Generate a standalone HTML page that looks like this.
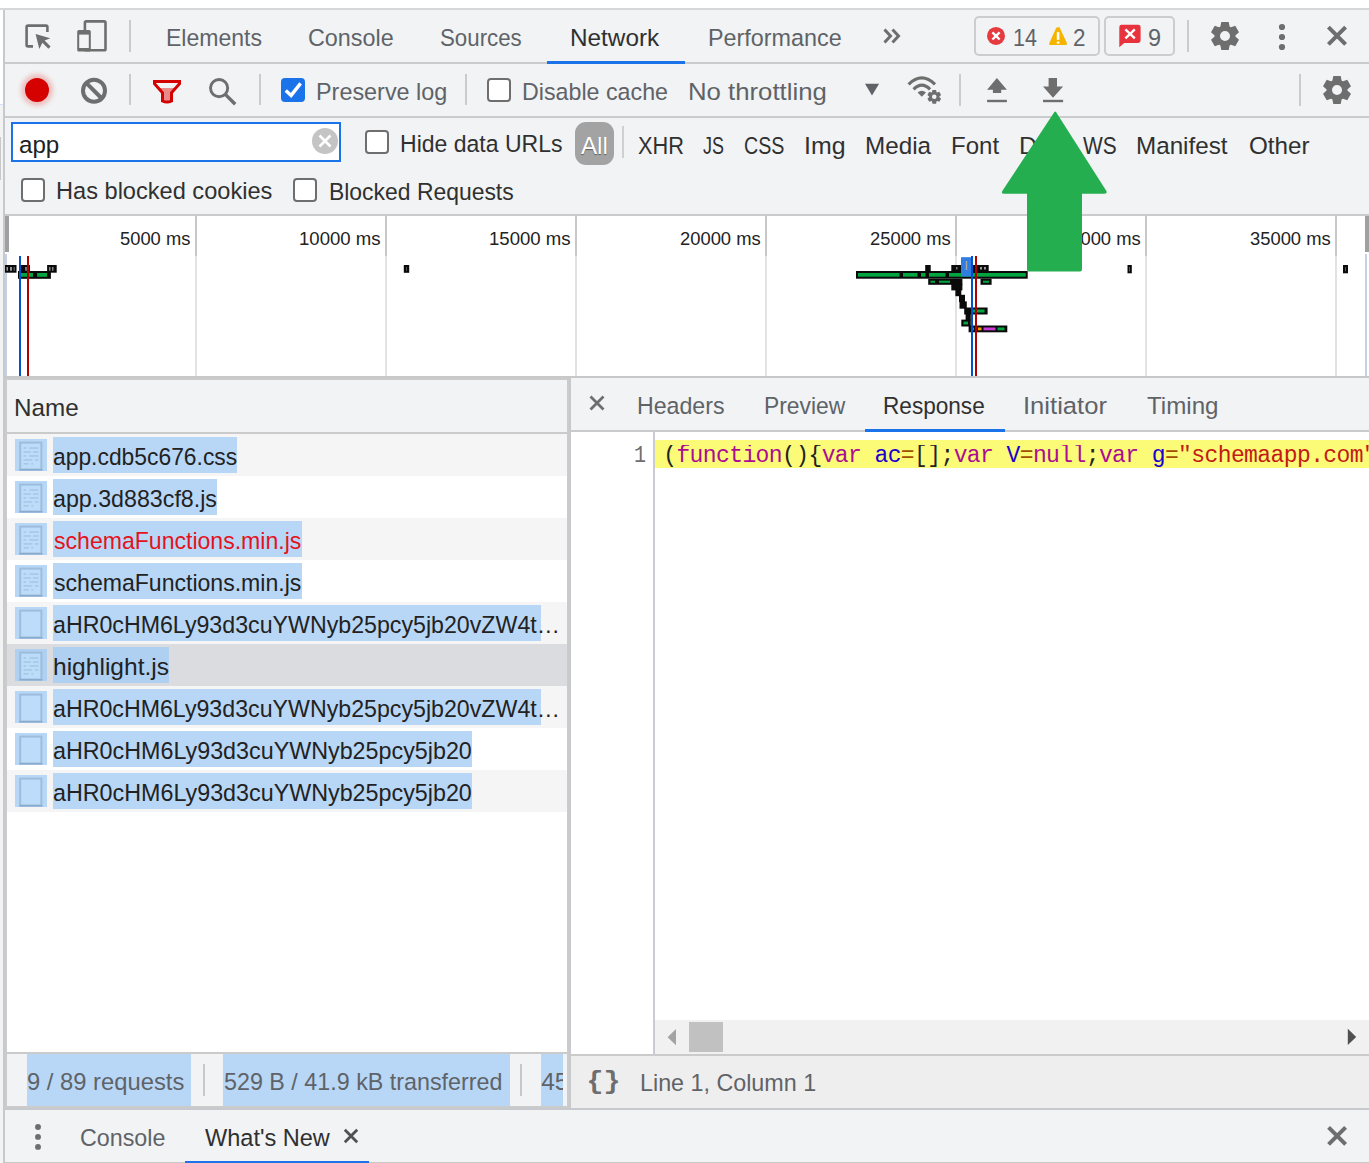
<!DOCTYPE html>
<html><head><meta charset="utf-8"><title>DevTools Network</title>
<style>
html,body{margin:0;padding:0;}
body{width:1369px;height:1163px;position:relative;overflow:hidden;background:#fff;font-family:'Liberation Sans',sans-serif;}
.b{position:absolute;}
.t{position:absolute;white-space:pre;transform-origin:0 0;font-family:'Liberation Sans',sans-serif;}
svg{position:absolute;overflow:visible;}
</style></head><body>
<!-- page behind devtools -->
<div class="b" style="left:0;top:104px;width:3px;height:1px;background:#d3e0f5"></div>
<div class="b" style="left:0;top:105px;width:3px;height:1058px;background:#f3f3f3"></div>
<div class="b" style="left:0;top:137px;width:1px;height:43px;background:#c8c8c8"></div>
<!-- devtools frame -->
<div class="b" style="left:0;top:8px;width:1369px;height:2px;background:#d5d7db"></div>
<div class="b" style="left:3px;top:10px;width:2px;height:1153px;background:#c6c9ce"></div>
<!-- toolbar 1 -->
<div class="b" style="left:5px;top:10px;width:1364px;height:52px;background:#f1f3f4"></div>
<div class="b" style="left:5px;top:62px;width:1364px;height:2px;background:#cbcbcb"></div>
<div class="b" style="left:547px;top:61px;width:138px;height:3px;background:#1a73e8"></div>
<!-- toolbar 2 -->
<div class="b" style="left:5px;top:64px;width:1364px;height:52px;background:#f1f3f4"></div>
<div class="b" style="left:5px;top:116px;width:1364px;height:2px;background:#cbcbcb"></div>
<!-- filter bar -->
<div class="b" style="left:5px;top:118px;width:1364px;height:96px;background:#f1f3f4"></div>
<div class="b" style="left:5px;top:214px;width:1364px;height:2px;background:#cbcbcb"></div>
<div class="b" style="left:11px;top:122px;width:326px;height:36px;background:#fff;border:2px solid #1a73e8"></div>
<div class="b" style="left:575px;top:122px;width:39px;height:43px;background:#a3a3a3;border-radius:11px"></div>
<div class="b" style="left:622px;top:126px;width:2px;height:32px;background:#d0d0d0"></div>
<!-- timeline -->
<div class="b" style="left:5px;top:216px;width:1364px;height:160px;background:#fff"></div>
<div class="b" style="left:5px;top:376px;width:1364px;height:2px;background:#c8c8c8"></div>
<!-- left panel -->
<div class="b" style="left:5px;top:378px;width:562px;height:730px;background:#fff"></div>
<div class="b" style="left:5px;top:378px;width:562px;height:2px;background:#cbcbcb"></div>
<div class="b" style="left:5px;top:380px;width:2px;height:728px;background:#cbcbcb"></div>
<div class="b" style="left:7px;top:380px;width:560px;height:52px;background:#f1f3f4"></div>
<div class="b" style="left:7px;top:432px;width:560px;height:2px;background:#cbcbcb"></div>
<div class="b" style="left:7px;top:434px;width:560px;height:42px;background:#f5f5f5"></div>
<div class="b" style="left:7px;top:518px;width:560px;height:42px;background:#f5f5f5"></div>
<div class="b" style="left:7px;top:602px;width:560px;height:42px;background:#f5f5f5"></div>
<div class="b" style="left:7px;top:644px;width:560px;height:42px;background:#dadce0"></div>
<div class="b" style="left:7px;top:686px;width:560px;height:42px;background:#f5f5f5"></div>
<div class="b" style="left:7px;top:770px;width:560px;height:42px;background:#f5f5f5"></div>
<!-- status bar left -->
<div class="b" style="left:7px;top:1052px;width:560px;height:2px;background:#cbcbcb"></div>
<div class="b" style="left:7px;top:1054px;width:560px;height:52px;background:#f1f3f4"></div>
<div class="b" style="left:5px;top:1106px;width:562px;height:2px;background:#cbcbcb"></div>
<!-- split divider -->
<div class="b" style="left:567px;top:378px;width:2px;height:730px;background:#cbcbcb"></div>
<div class="b" style="left:569px;top:378px;width:2px;height:730px;background:#c6c9ce"></div>
<!-- right panel -->
<div class="b" style="left:571px;top:378px;width:798px;height:52px;background:#f1f3f4"></div>
<div class="b" style="left:571px;top:430px;width:798px;height:2px;background:#cbcbcb"></div>
<div class="b" style="left:865px;top:429px;width:140px;height:3px;background:#1a73e8"></div>
<div class="b" style="left:571px;top:432px;width:798px;height:622px;background:#fff"></div>
<div class="b" style="left:653px;top:432px;width:2px;height:622px;background:#c9ccd2"></div>
<div class="b" style="left:655px;top:440px;width:714px;height:28px;background:#fbfb77"></div>
<div class="b" style="left:655px;top:1020px;width:714px;height:34px;background:#f1f1f1"></div>
<div class="b" style="left:689px;top:1022px;width:34px;height:30px;background:#c1c1c1"></div>
<div class="b" style="left:571px;top:1054px;width:798px;height:2px;background:#cbcbcb"></div>
<div class="b" style="left:571px;top:1056px;width:798px;height:52px;background:#eeeeee"></div>
<!-- drawer -->
<div class="b" style="left:5px;top:1108px;width:1364px;height:2px;background:#c6c9ce"></div>
<div class="b" style="left:5px;top:1110px;width:1364px;height:53px;background:#f1f3f4"></div>
<div class="b" style="left:5px;top:1162px;width:1364px;height:1px;background:#c8c8c8"></div>
<div class="b" style="left:185px;top:1161px;width:184px;height:2px;background:#1a73e8"></div>
<svg style="left:20px;top:18px;" width="36" height="36" viewBox="20 18 36 36">
<path d="M33,46.4 H28 Q26.6,46.4 26.6,45 V27 Q26.6,25.6 28,25.6 H46 Q47.4,25.6 47.4,27 V32" fill="none" stroke="#6e6e6e" stroke-width="2.6"/>
<path d="M35.6,34 L50.3,38.3 L44.6,40.6 L50.6,46.6 L48.4,48.8 L42.4,42.8 L39.3,48.9 Z" fill="#6e6e6e"/></svg>
<svg style="left:72px;top:16px;" width="40" height="40" viewBox="72 16 40 40">
<rect x="84.9" y="21.4" width="20.6" height="28.9" rx="1.4" fill="none" stroke="#6e6e6e" stroke-width="2.6"/>
<rect x="77.2" y="30.1" width="13.6" height="21.5" rx="1.6" fill="#6e6e6e"/>
<rect x="79.2" y="34.6" width="9.6" height="13.4" fill="#f1f3f4"/></svg>
<div class="b" style="left:129.0px;top:20px;width:2px;height:32px;background:#cbcbcb"></div>
<svg style="left:880px;top:26px;" width="24" height="20" viewBox="880 26 24 20"><path d="M884.5,29.5 L890.5,36 L884.5,42.5 M892.5,29.5 L898.5,36 L892.5,42.5" fill="none" stroke="#6e6e6e" stroke-width="3"/></svg>
<div class="b" style="left:974px;top:16px;width:122px;height:36px;border:2px solid #cbcdd1;border-radius:5px"></div>
<div class="b" style="left:1104px;top:16px;width:67px;height:36px;border:2px solid #cbcdd1;border-radius:5px"></div>
<svg style="left:985px;top:24px;" width="84" height="24" viewBox="985 24 84 24">
<circle cx="996" cy="35.9" r="9" fill="#e53a40"/>
<path d="M992.4,32.3 L999.6,39.5 M999.6,32.3 L992.4,39.5" stroke="#fff" stroke-width="2.4"/>
<path d="M1058,27.5 Q1058.8,26.6 1059.6,27.6 L1067,43.2 Q1067.4,45 1065.8,45 H1050.3 Q1048.7,45 1049.2,43.3 L1056.4,27.6 Z" fill="#f4b400"/>
<rect x="1056.8" y="32.2" width="2.6" height="7.6" fill="#fff"/><rect x="1056.8" y="41.6" width="2.6" height="2" fill="#fff"/></svg>
<svg style="left:1115px;top:22px;" width="30" height="28" viewBox="1115 22 30 28">
<path d="M1121.5,24.8 H1138.2 Q1140.6,24.8 1140.6,27.2 V40.5 Q1140.6,42.9 1138.2,42.9 H1124.2 L1119.3,47.3 V27.2 Q1119.3,24.8 1121.5,24.8 Z" fill="#e8333f"/>
<path d="M1125.4,29.4 L1134.8,38.3 M1134.8,29.4 L1125.4,38.3" stroke="#fff" stroke-width="2.4"/></svg>
<div class="b" style="left:1187.0px;top:20px;width:2px;height:32px;background:#cbcbcb"></div>
<svg style="left:1208px;top:19px;" width="34" height="34" viewBox="1208 19 34 34"><path d="M1220.40,26.40 L1221.30,22.00 L1228.70,22.00 L1229.60,26.40 L1230.20,26.99 L1231.01,27.22 L1235.27,25.80 L1238.97,32.20 L1235.61,35.18 L1235.40,36.00 L1235.61,36.82 L1238.97,39.80 L1235.27,46.20 L1231.01,44.78 L1230.20,45.01 L1229.60,45.60 L1228.70,50.00 L1221.30,50.00 L1220.40,45.60 L1219.80,45.01 L1218.99,44.78 L1214.73,46.20 L1211.03,39.80 L1214.39,36.82 L1214.60,36.00 L1214.39,35.18 L1211.03,32.20 L1214.73,25.80 L1218.99,27.22 L1219.80,26.99 Z M1230.0,36 A5.0,5.0 0 1 0 1220.0,36 A5.0,5.0 0 1 0 1230.0,36 Z" fill="#6e6e6e" fill-rule="evenodd"/></svg>
<svg style="left:1276px;top:20px;" width="12" height="32" viewBox="1276 20 12 32"><circle cx="1282" cy="27" r="3.1" fill="#6e6e6e"/><circle cx="1282" cy="37" r="3.1" fill="#6e6e6e"/><circle cx="1282" cy="47" r="3.1" fill="#6e6e6e"/></svg>
<svg style="left:1322px;top:21px;" width="30" height="30" viewBox="1322 21 30 30"><path d="M1328.4,27.2 L1345.6,44.4 M1345.6,27.2 L1328.4,44.4" stroke="#6e6e6e" stroke-width="4"/></svg>
<div class="b" style="left:25px;top:78px;width:24px;height:24px;border-radius:50%;background:#d50000;box-shadow:0 0 4px 4px rgba(229,57,53,.28)"></div>
<svg style="left:78px;top:76px;" width="32" height="32" viewBox="78 76 32 32"><circle cx="94" cy="90.7" r="11" fill="none" stroke="#6e6e6e" stroke-width="4"/><path d="M86.2,82.9 L101.8,98.5" stroke="#6e6e6e" stroke-width="4"/></svg>
<div class="b" style="left:129.0px;top:74px;width:2px;height:31px;background:#cbcbcb"></div>
<svg style="left:150px;top:77px;" width="34" height="30" viewBox="150 77 34 30">
<path d="M157.6,88 H176.4 L171.5,92.8 V101 Q167,103 162.5,101 V92.8 Z" fill="#e88a8a"/>
<path d="M154.5,81.5 H179.5 V83.8 L171.5,92.8 V101 Q167,103.2 162.5,101 V92.8 L154.5,83.8 Z" fill="none" stroke="#d50000" stroke-width="3" stroke-linejoin="miter"/></svg>
<svg style="left:206px;top:75px;" width="34" height="34" viewBox="206 75 34 34"><circle cx="219.1" cy="88.1" r="8.6" fill="none" stroke="#6e6e6e" stroke-width="2.9"/><path d="M225.6,94.6 L235.2,104.2" stroke="#6e6e6e" stroke-width="3.4"/></svg>
<div class="b" style="left:259.0px;top:74px;width:2px;height:31px;background:#cbcbcb"></div>
<div class="b" style="left:281px;top:78px;width:24px;height:24px;border-radius:4px;background:#1a73e8"></div>
<svg style="left:281px;top:78px;" width="24" height="24" viewBox="281 78 24 24"><path d="M285.8,90.4 L291.1,95.4 L300.6,83.4" fill="none" stroke="#fff" stroke-width="3.4"/></svg>
<div class="b" style="left:465.0px;top:74px;width:2px;height:31px;background:#cbcbcb"></div>
<div class="b" style="left:487px;top:78px;width:20px;height:20px;border:2px solid #6e6e6e;border-radius:4px;background:#fff"></div>
<svg style="left:862px;top:82px;" width="20" height="16" viewBox="862 82 20 16"><path d="M865,83.7 H879.1 L872,95.6 Z" fill="#5f6368"/></svg>
<svg style="left:904px;top:72px;" width="42" height="34" viewBox="904 72 42 34">
<path d="M908.6,84.3 Q921.8,71.5 935,84.3" fill="none" stroke="#6e6e6e" stroke-width="3.2"/>
<path d="M913.6,89.3 Q921.8,81 930,89.3" fill="none" stroke="#6e6e6e" stroke-width="3.2"/>
<path d="M917.6,92.6 Q921.8,89 926,92.6 L921.8,96.8 Z" fill="#6e6e6e"/>
<circle cx="934.2" cy="96.9" r="6.6" fill="#f1f3f4"/><path d="M932.00,92.10 L932.44,89.94 L936.06,89.94 L936.50,92.10 L936.80,92.39 L937.20,92.50 L939.28,91.80 L941.10,94.94 L939.45,96.40 L939.35,96.80 L939.45,97.20 L941.10,98.66 L939.28,101.80 L937.20,101.10 L936.80,101.21 L936.50,101.50 L936.06,103.66 L932.44,103.66 L932.00,101.50 L931.70,101.21 L931.30,101.10 L929.22,101.80 L927.40,98.66 L929.05,97.20 L929.15,96.80 L929.05,96.40 L927.40,94.94 L929.22,91.80 L931.30,92.50 L931.70,92.39 Z M936.55,96.8 A2.3,2.3 0 1 0 931.95,96.8 A2.3,2.3 0 1 0 936.55,96.8 Z" fill="#6e6e6e" fill-rule="evenodd"/></svg>
<div class="b" style="left:959.0px;top:74px;width:2px;height:32px;background:#cbcbcb"></div>
<svg style="left:984px;top:75px;" width="28" height="30" viewBox="984 75 28 30"><path d="M996.9,78 L1006.9,89.7 H1001.2 V93 H992.9 V89.7 H987.1 Z" fill="#6e6e6e"/><rect x="987.1" y="99.8" width="19.8" height="2.4" fill="#6e6e6e"/></svg>
<svg style="left:1040px;top:75px;" width="28" height="30" viewBox="1040 75 28 30"><path d="M1048.6,78 H1057 V86.5 H1063.1 L1053,97.7 L1043,86.5 H1048.6 Z" fill="#6e6e6e"/><rect x="1043" y="99.8" width="20.1" height="2.4" fill="#6e6e6e"/></svg>
<div class="b" style="left:1299.0px;top:74px;width:2px;height:32px;background:#cbcbcb"></div>
<svg style="left:1320px;top:73px;" width="34" height="34" viewBox="1320 73 34 34"><path d="M1332.40,80.40 L1333.30,76.00 L1340.70,76.00 L1341.60,80.40 L1342.20,80.99 L1343.01,81.22 L1347.27,79.80 L1350.97,86.20 L1347.61,89.18 L1347.40,90.00 L1347.61,90.82 L1350.97,93.80 L1347.27,100.20 L1343.01,98.78 L1342.20,99.01 L1341.60,99.60 L1340.70,104.00 L1333.30,104.00 L1332.40,99.60 L1331.80,99.01 L1330.99,98.78 L1326.73,100.20 L1323.03,93.80 L1326.39,90.82 L1326.60,90.00 L1326.39,89.18 L1323.03,86.20 L1326.73,79.80 L1330.99,81.22 L1331.80,80.99 Z M1342.0,90 A5.0,5.0 0 1 0 1332.0,90 A5.0,5.0 0 1 0 1342.0,90 Z" fill="#6e6e6e" fill-rule="evenodd"/></svg>
<svg style="left:310px;top:126px;" width="30" height="30" viewBox="310 126 30 30"><circle cx="325" cy="141" r="13" fill="#c4c4c4"/><path d="M319.5,135.5 L330.5,146.5 M330.5,135.5 L319.5,146.5" stroke="#fff" stroke-width="2.6"/></svg>
<div class="b" style="left:365px;top:130px;width:20px;height:20px;border:2px solid #6e6e6e;border-radius:4px;background:#fff"></div>
<div class="b" style="left:21px;top:178px;width:20px;height:20px;border:2px solid #6e6e6e;border-radius:4px;background:#fff"></div>
<div class="b" style="left:293px;top:178px;width:20px;height:20px;border:2px solid #6e6e6e;border-radius:4px;background:#fff"></div>
<svg style="left:0;top:0" width="1369" height="1163" viewBox="0 0 1369 1163"><rect x="195" y="216" width="2.00" height="40.00" fill="#c8c8c8"/><rect x="195" y="256" width="2.00" height="120.00" fill="#e2e2e2"/><rect x="385" y="216" width="2.00" height="40.00" fill="#c8c8c8"/><rect x="385" y="256" width="2.00" height="120.00" fill="#e2e2e2"/><rect x="575" y="216" width="2.00" height="40.00" fill="#c8c8c8"/><rect x="575" y="256" width="2.00" height="120.00" fill="#e2e2e2"/><rect x="765" y="216" width="2.00" height="40.00" fill="#c8c8c8"/><rect x="765" y="256" width="2.00" height="120.00" fill="#e2e2e2"/><rect x="955" y="216" width="2.00" height="40.00" fill="#c8c8c8"/><rect x="955" y="256" width="2.00" height="120.00" fill="#e2e2e2"/><rect x="1145" y="216" width="2.00" height="40.00" fill="#c8c8c8"/><rect x="1145" y="256" width="2.00" height="120.00" fill="#e2e2e2"/><rect x="1335" y="216" width="2.00" height="40.00" fill="#c8c8c8"/><rect x="1335" y="256" width="2.00" height="120.00" fill="#e2e2e2"/><rect x="5" y="216" width="4.00" height="36.00" fill="#a0a0a0"/><rect x="5" y="254" width="2.00" height="122.00" fill="#c3d0e6"/><rect x="1365" y="216" width="4.00" height="36.00" fill="#a0a0a0"/><rect x="1365" y="254" width="2.00" height="122.00" fill="#c3d0e6"/><rect x="5" y="265" width="11.50" height="7.70" fill="#0a0a0a"/><rect x="6.5" y="267" width="1.50" height="3.70" fill="#9a9a9a"/><rect x="10" y="267" width="2.00" height="3.70" fill="#9a9a9a"/><rect x="13.5" y="267" width="1.50" height="3.70" fill="#555"/><rect x="20.6" y="265" width="9.40" height="7.70" fill="#0a0a0a"/><rect x="25" y="267" width="2.00" height="3.70" fill="#777"/><rect x="47.1" y="265" width="9.60" height="7.70" fill="#0a0a0a"/><rect x="49" y="267" width="1.50" height="3.70" fill="#888"/><rect x="52" y="267" width="1.50" height="3.70" fill="#888"/><rect x="18" y="271" width="32.90" height="7.80" fill="#0a0a0a"/><rect x="20.6" y="273" width="12.40" height="3.80" fill="#00a540"/><rect x="37.1" y="273" width="10.00" height="3.80" fill="#00a540"/><rect x="403.8" y="265" width="5.40" height="7.80" fill="#0a0a0a"/><rect x="406" y="267" width="1.00" height="3.80" fill="#555"/><rect x="1127.5" y="265" width="4.30" height="8.30" fill="#0a0a0a"/><rect x="1129" y="267" width="1.00" height="4.30" fill="#555"/><rect x="1343" y="265" width="5.00" height="8.30" fill="#0a0a0a"/><rect x="1345" y="267" width="1.00" height="4.30" fill="#555"/><rect x="925.2" y="265" width="5.50" height="6.50" fill="#0a0a0a"/><rect x="951.3" y="265" width="37.40" height="6.50" fill="#0a0a0a"/><rect x="956" y="267" width="1.50" height="2.50" fill="#777"/><rect x="975" y="267" width="2.00" height="2.50" fill="#777"/><rect x="980" y="267" width="2.00" height="2.50" fill="#999"/><rect x="984" y="267" width="2.00" height="2.50" fill="#999"/><rect x="856" y="271" width="171.70" height="7.70" fill="#0a0a0a"/><rect x="858" y="273" width="41.50" height="3.70" fill="#00a540"/><rect x="903" y="273" width="14.50" height="3.70" fill="#00a540"/><rect x="921" y="273" width="4.50" height="3.70" fill="#00a540"/><rect x="929" y="273" width="16.50" height="3.70" fill="#00a540"/><rect x="949" y="273" width="76.70" height="3.70" fill="#00a540"/><rect x="928.2" y="278.7" width="34.20" height="6.10" fill="#0a0a0a"/><rect x="930.5" y="280.7" width="4.50" height="2.10" fill="#00a540"/><rect x="939" y="280.7" width="11.00" height="2.10" fill="#00a540"/><rect x="980.5" y="278.7" width="11.10" height="6.10" fill="#0a0a0a"/><rect x="983" y="280.7" width="6.00" height="2.10" fill="#00a540"/><rect x="951.3" y="284" width="11.10" height="6.40" fill="#0a0a0a"/><rect x="955.4" y="289.7" width="5.90" height="6.50" fill="#0a0a0a"/><rect x="959" y="294.8" width="6.00" height="7.20" fill="#0a0a0a"/><rect x="959.5" y="301.4" width="7.30" height="7.30" fill="#0a0a0a"/><rect x="964.2" y="307.5" width="23.40" height="7.00" fill="#0a0a0a"/><rect x="972" y="309.5" width="12.50" height="3.00" fill="#00a540"/><rect x="965.6" y="313.8" width="5.20" height="6.60" fill="#0a0a0a"/><rect x="961.3" y="319.6" width="9.50" height="6.90" fill="#0a0a0a"/><rect x="963.5" y="321.6" width="4.50" height="2.90" fill="#00a540"/><rect x="968.6" y="325.5" width="38.70" height="6.80" fill="#0a0a0a"/><rect x="971" y="327.5" width="3.00" height="2.80" fill="#1aa39a"/><rect x="978" y="327.5" width="3.50" height="2.80" fill="#f29900"/><rect x="983.5" y="327.5" width="12.00" height="2.80" fill="#c93cd6"/><rect x="997.5" y="327.5" width="7.00" height="2.80" fill="#00a540"/><rect x="961" y="257.2" width="11.20" height="19.30" fill="#2f7de1"/><rect x="965.8" y="261" width="1.40" height="9.00" fill="#a8a8a8"/><rect x="19" y="256" width="2.00" height="120.00" fill="#0053cc"/><rect x="27" y="256" width="2.00" height="120.00" fill="#b00000"/><rect x="971" y="256" width="2.00" height="120.00" fill="#0053cc"/><rect x="975" y="256" width="2.00" height="120.00" fill="#b00000"/></svg>
<div class="b" style="left:53px;top:437px;width:183.9px;height:36px;background:#b8d7f6"></div>
<div class="b" style="left:15px;top:439px;width:32px;height:32px;background:#b8d7f6"></div>
<svg style="left:15px;top:439px" width="32" height="32" viewBox="15 439 32 32"><rect x="20.2" y="442.6" width="21.2" height="26.9" fill="#bddcf9" stroke="#9dbddd" stroke-width="2"/><rect x="19.2" y="469" width="23.2" height="1.5" fill="#89abcd"/><rect x="23.6" y="447.40" width="2.6" height="1.3" fill="#a2c2e2"/><rect x="29.3" y="447.40" width="9.2" height="1.3" fill="#a2c2e2"/><rect x="23.6" y="451.35" width="7.2" height="1.3" fill="#a2c2e2"/><rect x="33.1" y="451.35" width="5.4" height="1.3" fill="#a2c2e2"/><rect x="23.6" y="455.30" width="2.6" height="1.3" fill="#a2c2e2"/><rect x="29.3" y="455.30" width="9.2" height="1.3" fill="#a2c2e2"/><rect x="23.6" y="459.25" width="8.7" height="1.3" fill="#a2c2e2"/><rect x="34.9" y="459.25" width="3.6" height="1.3" fill="#a2c2e2"/><rect x="23.6" y="463.20" width="5.1" height="1.3" fill="#a2c2e2"/><rect x="31.3" y="463.20" width="1.8" height="1.3" fill="#a2c2e2"/></svg>
<div class="b" style="left:53px;top:479px;width:163.9px;height:36px;background:#b8d7f6"></div>
<div class="b" style="left:15px;top:481px;width:32px;height:32px;background:#b8d7f6"></div>
<svg style="left:15px;top:481px" width="32" height="32" viewBox="15 481 32 32"><rect x="20.2" y="484.6" width="21.2" height="26.9" fill="#bddcf9" stroke="#9dbddd" stroke-width="2"/><rect x="19.2" y="511" width="23.2" height="1.5" fill="#89abcd"/><rect x="23.6" y="489.40" width="2.6" height="1.3" fill="#a2c2e2"/><rect x="29.3" y="489.40" width="9.2" height="1.3" fill="#a2c2e2"/><rect x="23.6" y="493.35" width="7.2" height="1.3" fill="#a2c2e2"/><rect x="33.1" y="493.35" width="5.4" height="1.3" fill="#a2c2e2"/><rect x="23.6" y="497.30" width="2.6" height="1.3" fill="#a2c2e2"/><rect x="29.3" y="497.30" width="9.2" height="1.3" fill="#a2c2e2"/><rect x="23.6" y="501.25" width="8.7" height="1.3" fill="#a2c2e2"/><rect x="34.9" y="501.25" width="3.6" height="1.3" fill="#a2c2e2"/><rect x="23.6" y="505.20" width="5.1" height="1.3" fill="#a2c2e2"/><rect x="31.3" y="505.20" width="1.8" height="1.3" fill="#a2c2e2"/></svg>
<div class="b" style="left:53px;top:521px;width:249.2px;height:36px;background:#b8d7f6"></div>
<div class="b" style="left:15px;top:523px;width:32px;height:32px;background:#b8d7f6"></div>
<svg style="left:15px;top:523px" width="32" height="32" viewBox="15 523 32 32"><rect x="20.2" y="526.6" width="21.2" height="26.9" fill="#bddcf9" stroke="#9dbddd" stroke-width="2"/><rect x="19.2" y="553" width="23.2" height="1.5" fill="#89abcd"/><rect x="23.6" y="531.40" width="2.6" height="1.3" fill="#a2c2e2"/><rect x="29.3" y="531.40" width="9.2" height="1.3" fill="#a2c2e2"/><rect x="23.6" y="535.35" width="7.2" height="1.3" fill="#a2c2e2"/><rect x="33.1" y="535.35" width="5.4" height="1.3" fill="#a2c2e2"/><rect x="23.6" y="539.30" width="2.6" height="1.3" fill="#a2c2e2"/><rect x="29.3" y="539.30" width="9.2" height="1.3" fill="#a2c2e2"/><rect x="23.6" y="543.25" width="8.7" height="1.3" fill="#a2c2e2"/><rect x="34.9" y="543.25" width="3.6" height="1.3" fill="#a2c2e2"/><rect x="23.6" y="547.20" width="5.1" height="1.3" fill="#a2c2e2"/><rect x="31.3" y="547.20" width="1.8" height="1.3" fill="#a2c2e2"/></svg>
<div class="b" style="left:53px;top:563px;width:249.2px;height:36px;background:#b8d7f6"></div>
<div class="b" style="left:15px;top:565px;width:32px;height:32px;background:#b8d7f6"></div>
<svg style="left:15px;top:565px" width="32" height="32" viewBox="15 565 32 32"><rect x="20.2" y="568.6" width="21.2" height="26.9" fill="#bddcf9" stroke="#9dbddd" stroke-width="2"/><rect x="19.2" y="595" width="23.2" height="1.5" fill="#89abcd"/><rect x="23.6" y="573.40" width="2.6" height="1.3" fill="#a2c2e2"/><rect x="29.3" y="573.40" width="9.2" height="1.3" fill="#a2c2e2"/><rect x="23.6" y="577.35" width="7.2" height="1.3" fill="#a2c2e2"/><rect x="33.1" y="577.35" width="5.4" height="1.3" fill="#a2c2e2"/><rect x="23.6" y="581.30" width="2.6" height="1.3" fill="#a2c2e2"/><rect x="29.3" y="581.30" width="9.2" height="1.3" fill="#a2c2e2"/><rect x="23.6" y="585.25" width="8.7" height="1.3" fill="#a2c2e2"/><rect x="34.9" y="585.25" width="3.6" height="1.3" fill="#a2c2e2"/><rect x="23.6" y="589.20" width="5.1" height="1.3" fill="#a2c2e2"/><rect x="31.3" y="589.20" width="1.8" height="1.3" fill="#a2c2e2"/></svg>
<div class="b" style="left:53px;top:605px;width:487.8px;height:36px;background:#b8d7f6"></div>
<div class="b" style="left:15px;top:607px;width:32px;height:32px;background:#b8d7f6"></div>
<svg style="left:15px;top:607px" width="32" height="32" viewBox="15 607 32 32"><rect x="20.2" y="610.6" width="21.2" height="26.9" fill="#bddcf9" stroke="#9dbddd" stroke-width="2"/><rect x="19.2" y="637" width="23.2" height="1.5" fill="#89abcd"/></svg>
<div class="b" style="left:53px;top:647px;width:115.9px;height:36px;background:#afd0f1"></div>
<div class="b" style="left:15px;top:649px;width:32px;height:32px;background:#afd0f1"></div>
<svg style="left:15px;top:649px" width="32" height="32" viewBox="15 649 32 32"><rect x="20.2" y="652.6" width="21.2" height="26.9" fill="#bddcf9" stroke="#9dbddd" stroke-width="2"/><rect x="19.2" y="679" width="23.2" height="1.5" fill="#89abcd"/><rect x="23.6" y="657.40" width="2.6" height="1.3" fill="#a2c2e2"/><rect x="29.3" y="657.40" width="9.2" height="1.3" fill="#a2c2e2"/><rect x="23.6" y="661.35" width="7.2" height="1.3" fill="#a2c2e2"/><rect x="33.1" y="661.35" width="5.4" height="1.3" fill="#a2c2e2"/><rect x="23.6" y="665.30" width="2.6" height="1.3" fill="#a2c2e2"/><rect x="29.3" y="665.30" width="9.2" height="1.3" fill="#a2c2e2"/><rect x="23.6" y="669.25" width="8.7" height="1.3" fill="#a2c2e2"/><rect x="34.9" y="669.25" width="3.6" height="1.3" fill="#a2c2e2"/><rect x="23.6" y="673.20" width="5.1" height="1.3" fill="#a2c2e2"/><rect x="31.3" y="673.20" width="1.8" height="1.3" fill="#a2c2e2"/></svg>
<div class="b" style="left:53px;top:689px;width:487.8px;height:36px;background:#b8d7f6"></div>
<div class="b" style="left:15px;top:691px;width:32px;height:32px;background:#b8d7f6"></div>
<svg style="left:15px;top:691px" width="32" height="32" viewBox="15 691 32 32"><rect x="20.2" y="694.6" width="21.2" height="26.9" fill="#bddcf9" stroke="#9dbddd" stroke-width="2"/><rect x="19.2" y="721" width="23.2" height="1.5" fill="#89abcd"/></svg>
<div class="b" style="left:53px;top:731px;width:419.0px;height:36px;background:#b8d7f6"></div>
<div class="b" style="left:15px;top:733px;width:32px;height:32px;background:#b8d7f6"></div>
<svg style="left:15px;top:733px" width="32" height="32" viewBox="15 733 32 32"><rect x="20.2" y="736.6" width="21.2" height="26.9" fill="#bddcf9" stroke="#9dbddd" stroke-width="2"/><rect x="19.2" y="763" width="23.2" height="1.5" fill="#89abcd"/></svg>
<div class="b" style="left:53px;top:773px;width:419.0px;height:36px;background:#b8d7f6"></div>
<div class="b" style="left:15px;top:775px;width:32px;height:32px;background:#b8d7f6"></div>
<svg style="left:15px;top:775px" width="32" height="32" viewBox="15 775 32 32"><rect x="20.2" y="778.6" width="21.2" height="26.9" fill="#bddcf9" stroke="#9dbddd" stroke-width="2"/><rect x="19.2" y="805" width="23.2" height="1.5" fill="#89abcd"/></svg>
<svg style="left:586px;top:392px;" width="22" height="22" viewBox="586 392 22 22"><path d="M590.5,396.5 L603.5,409.5 M603.5,396.5 L590.5,409.5" stroke="#6e6e6e" stroke-width="2.8"/></svg>
<svg style="left:664px;top:1026px;" width="16" height="22" viewBox="664 1026 16 22"><path d="M676,1029 V1045.3 L667.6,1037.2 Z" fill="#a3a3a3"/></svg>
<svg style="left:1344px;top:1026px;" width="16" height="22" viewBox="1344 1026 16 22"><path d="M1347.8,1028.7 V1045.1 L1356.2,1036.9 Z" fill="#505050"/></svg>
<svg style="left:584px;top:1066px;" width="40" height="32" viewBox="584 1066 40 32"><text x="586.5" y="1088.6" font-family="Liberation Mono" font-weight="bold" font-size="25" fill="#6e6e6e" textLength="34" lengthAdjust="spacingAndGlyphs">{}</text></svg>
<div class="b" style="left:27px;top:1054px;width:164.0px;height:52px;background:#b8d7f6"></div>
<div class="b" style="left:223px;top:1054px;width:287.0px;height:52px;background:#b8d7f6"></div>
<div class="b" style="left:541px;top:1054px;width:22.2px;height:52px;background:#b8d7f6"></div>
<div class="b" style="left:203.0px;top:1064px;width:2px;height:32px;background:#c8c8c8"></div>
<div class="b" style="left:520.4px;top:1064px;width:2px;height:32px;background:#c8c8c8"></div>
<svg style="left:30px;top:1120px;" width="16" height="34" viewBox="30 1120 16 34"><circle cx="38" cy="1127" r="2.95" fill="#6e6e6e"/><circle cx="38" cy="1136.9" r="2.95" fill="#6e6e6e"/><circle cx="38" cy="1146.9" r="2.95" fill="#6e6e6e"/></svg>
<svg style="left:340px;top:1125px;" width="22" height="22" viewBox="340 1125 22 22"><path d="M344.8,1129.8 L357.2,1142.2 M357.2,1129.8 L344.8,1142.2" stroke="#505050" stroke-width="2.8"/></svg>
<svg style="left:1322px;top:1121px;" width="30" height="30" viewBox="1322 1121 30 30"><path d="M1328.6,1127.3 L1345.6,1144.3 M1345.6,1127.3 L1328.6,1144.3" stroke="#6e6e6e" stroke-width="4"/></svg>
<div class="b" style="left:663.2px;top:444.58px;width:705.8px;height:28px;overflow:hidden;white-space:pre;font-family:'Liberation Mono',monospace;font-size:23px;line-height:23px;letter-spacing:-0.6px"><span style="color:#222">(</span><span style="color:#aa0d91">function</span><span style="color:#222">(){</span><span style="color:#aa0d91">var</span><span style="color:#222"> </span><span style="color:#1c00cf">ac</span><span style="color:#a14f00">=</span><span style="color:#222">[];</span><span style="color:#aa0d91">var</span><span style="color:#222"> </span><span style="color:#1c00cf">V</span><span style="color:#a14f00">=</span><span style="color:#aa0d91">null</span><span style="color:#222">;</span><span style="color:#aa0d91">var</span><span style="color:#222"> </span><span style="color:#1c00cf">g</span><span style="color:#a14f00">=</span><span style="color:#c41a16">"schemaapp.com";</span></div>
<span class="t" style="left:165.52px;top:26.16px;font-size:24.5px;line-height:24.5px;color:#5f6368;transform:scaleX(0.9402);">Elements</span>
<span class="t" style="left:307.75px;top:26.16px;font-size:24.5px;line-height:24.5px;color:#5f6368;transform:scaleX(0.9528);">Console</span>
<span class="t" style="left:440.49px;top:26.16px;font-size:24.5px;line-height:24.5px;color:#5f6368;transform:scaleX(0.9094);">Sources</span>
<span class="t" style="left:569.71px;top:26.16px;font-size:24.5px;line-height:24.5px;color:#303030;transform:scaleX(0.9932);">Network</span>
<span class="t" style="left:707.69px;top:26.16px;font-size:24.5px;line-height:24.5px;color:#5f6368;transform:scaleX(0.9533);">Performance</span>
<span class="t" style="left:1012.62px;top:25.86px;font-size:24.5px;line-height:24.5px;color:#5f6368;transform:scaleX(0.8780);">14</span>
<span class="t" style="left:1073.08px;top:25.86px;font-size:24.5px;line-height:24.5px;color:#5f6368;transform:scaleX(0.9167);">2</span>
<span class="t" style="left:1147.54px;top:25.86px;font-size:24.5px;line-height:24.5px;color:#5f6368;transform:scaleX(0.9583);">9</span>
<span class="t" style="left:315.79px;top:80.06px;font-size:24.5px;line-height:24.5px;color:#5f6368;transform:scaleX(0.9547);">Preserve log</span>
<span class="t" style="left:521.90px;top:80.06px;font-size:24.5px;line-height:24.5px;color:#5f6368;transform:scaleX(0.9487);">Disable cache</span>
<span class="t" style="left:688.30px;top:80.06px;font-size:24.5px;line-height:24.5px;color:#5f6368;transform:scaleX(1.0504);">No throttling</span>
<span class="t" style="left:18.71px;top:133.26px;font-size:24.5px;line-height:24.5px;color:#202124;transform:scaleX(0.9860);">app</span>
<span class="t" style="left:399.92px;top:131.66px;font-size:24.5px;line-height:24.5px;color:#303030;transform:scaleX(0.9397);">Hide data URLs</span>
<span class="t" style="left:580.80px;top:134.46px;font-size:24.5px;line-height:24.5px;color:#fff;transform:scaleX(0.9851);text-shadow:0 1px 1px rgba(0,0,0,.45);">All</span>
<span class="t" style="left:638.00px;top:133.76px;font-size:24.5px;line-height:24.5px;color:#303030;transform:scaleX(0.8876);">XHR</span>
<span class="t" style="left:703.30px;top:133.76px;font-size:24.5px;line-height:24.5px;color:#303030;transform:scaleX(0.7327);">JS</span>
<span class="t" style="left:744.20px;top:133.76px;font-size:24.5px;line-height:24.5px;color:#303030;transform:scaleX(0.8015);">CSS</span>
<span class="t" style="left:803.97px;top:133.76px;font-size:24.5px;line-height:24.5px;color:#303030;transform:scaleX(1.0153);">Img</span>
<span class="t" style="left:865.02px;top:133.76px;font-size:24.5px;line-height:24.5px;color:#303030;transform:scaleX(0.9892);">Media</span>
<span class="t" style="left:951.24px;top:133.76px;font-size:24.5px;line-height:24.5px;color:#303030;transform:scaleX(0.9806);">Font</span>
<span class="t" style="left:1018.86px;top:133.76px;font-size:24.5px;line-height:24.5px;color:#303030;transform:scaleX(1.0189);">Doc</span>
<span class="t" style="left:1082.60px;top:133.76px;font-size:24.5px;line-height:24.5px;color:#303030;transform:scaleX(0.8537);">WS</span>
<span class="t" style="left:1136.02px;top:133.76px;font-size:24.5px;line-height:24.5px;color:#303030;transform:scaleX(0.9880);">Manifest</span>
<span class="t" style="left:1248.61px;top:133.76px;font-size:24.5px;line-height:24.5px;color:#303030;transform:scaleX(0.9881);">Other</span>
<span class="t" style="left:55.87px;top:179.26px;font-size:24.5px;line-height:24.5px;color:#303030;transform:scaleX(0.9629);">Has blocked cookies</span>
<span class="t" style="left:328.53px;top:179.66px;font-size:24.5px;line-height:24.5px;color:#303030;transform:scaleX(0.9353);">Blocked Requests</span>
<span class="t" style="left:120.40px;top:229.94px;font-size:18.5px;line-height:18.5px;color:#222;transform:scaleX(0.9914);">5000 ms</span>
<span class="t" style="left:298.99px;top:229.94px;font-size:18.5px;line-height:18.5px;color:#222;transform:scaleX(1.0051);">10000 ms</span>
<span class="t" style="left:488.99px;top:229.94px;font-size:18.5px;line-height:18.5px;color:#222;transform:scaleX(1.0051);">15000 ms</span>
<span class="t" style="left:680.00px;top:229.94px;font-size:18.5px;line-height:18.5px;color:#222;transform:scaleX(0.9927);">20000 ms</span>
<span class="t" style="left:870.00px;top:229.94px;font-size:18.5px;line-height:18.5px;color:#222;transform:scaleX(0.9927);">25000 ms</span>
<span class="t" style="left:1060.00px;top:229.94px;font-size:18.5px;line-height:18.5px;color:#222;transform:scaleX(0.9927);">30000 ms</span>
<span class="t" style="left:1249.90px;top:229.94px;font-size:18.5px;line-height:18.5px;color:#222;transform:scaleX(0.9927);">35000 ms</span>
<span class="t" style="left:13.82px;top:395.86px;font-size:24.5px;line-height:24.5px;color:#303030;transform:scaleX(0.9884);">Name</span>
<span class="t" style="left:52.77px;top:445.46px;font-size:24.5px;line-height:24.5px;color:#222;transform:scaleX(0.9325);">app.cdb5c676.css</span>
<span class="t" style="left:52.75px;top:487.46px;font-size:24.5px;line-height:24.5px;color:#222;transform:scaleX(0.9479);">app.3d883cf8.js</span>
<span class="t" style="left:53.70px;top:529.46px;font-size:24.5px;line-height:24.5px;color:#e3131b;transform:scaleX(0.9412);">schemaFunctions.min.js</span>
<span class="t" style="left:53.70px;top:571.46px;font-size:24.5px;line-height:24.5px;color:#222;transform:scaleX(0.9412);">schemaFunctions.min.js</span>
<span class="t" style="left:52.75px;top:613.46px;font-size:24.5px;line-height:24.5px;color:#222;transform:scaleX(0.9465);">aHR0cHM6Ly93d3cuYWNyb25pcy5jb20vZW4t…</span>
<span class="t" style="left:52.70px;top:655.46px;font-size:24.5px;line-height:24.5px;color:#222;transform:scaleX(1.0025);">highlight.js</span>
<span class="t" style="left:52.75px;top:697.46px;font-size:24.5px;line-height:24.5px;color:#222;transform:scaleX(0.9465);">aHR0cHM6Ly93d3cuYWNyb25pcy5jb20vZW4t…</span>
<span class="t" style="left:52.75px;top:739.46px;font-size:24.5px;line-height:24.5px;color:#222;transform:scaleX(0.9512);">aHR0cHM6Ly93d3cuYWNyb25pcy5jb20</span>
<span class="t" style="left:52.75px;top:781.46px;font-size:24.5px;line-height:24.5px;color:#222;transform:scaleX(0.9512);">aHR0cHM6Ly93d3cuYWNyb25pcy5jb20</span>
<span class="t" style="left:637.21px;top:393.86px;font-size:24.5px;line-height:24.5px;color:#5f6368;transform:scaleX(0.9452);">Headers</span>
<span class="t" style="left:763.53px;top:393.86px;font-size:24.5px;line-height:24.5px;color:#5f6368;transform:scaleX(0.9328);">Preview</span>
<span class="t" style="left:882.86px;top:393.86px;font-size:24.5px;line-height:24.5px;color:#303030;transform:scaleX(0.9220);">Response</span>
<span class="t" style="left:1022.71px;top:393.86px;font-size:24.5px;line-height:24.5px;color:#5f6368;transform:scaleX(1.0450);">Initiator</span>
<span class="t" style="left:1146.90px;top:393.86px;font-size:24.5px;line-height:24.5px;color:#5f6368;transform:scaleX(0.9850);">Timing</span>
<span class="t" style="left:634.33px;top:444.78px;font-size:23px;line-height:23px;color:#6e6e6e;transform:scaleX(0.8667);font-family:'Liberation Mono', monospace;">1</span>
<span class="t" style="left:26.63px;top:1069.56px;font-size:24.5px;line-height:24.5px;color:#5f6368;transform:scaleX(0.9706);">9 / 89 requests</span>
<div class="b" style="left:539.2px;top:1054px;width:23.799999999999955px;height:52px;overflow:hidden"><span class="t" style="left:2.00px;top:15.86px;font-size:24.5px;line-height:24.5px;color:#5f6368">45</span></div>
<span class="t" style="left:223.60px;top:1069.56px;font-size:24.5px;line-height:24.5px;color:#5f6368;transform:scaleX(0.9511);">529 B / 41.9 kB transferred</span>
<span class="t" style="left:640.40px;top:1071.46px;font-size:24.5px;line-height:24.5px;color:#5f6368;transform:scaleX(0.9507);">Line 1, Column 1</span>
<span class="t" style="left:79.85px;top:1125.56px;font-size:24.5px;line-height:24.5px;color:#5f6368;transform:scaleX(0.9506);">Console</span>
<span class="t" style="left:205.20px;top:1125.66px;font-size:24.5px;line-height:24.5px;color:#303030;transform:scaleX(0.9606);">What&#x27;s New</span>
<svg style="left:990px;top:100px" width="130" height="180" viewBox="990 100 130 180"><path d="M1054.4,112 Q1055.2,110.8 1056,112 L1106.4,191 Q1107.5,193.7 1104.5,193.7 H1082 V269.5 Q1082,271.6 1080,271.6 H1029 Q1027,271.6 1027,269.5 V193.7 H1004 Q1001,193.7 1002.3,191 Z" fill="#24ae4f"/></svg>
</body></html>
